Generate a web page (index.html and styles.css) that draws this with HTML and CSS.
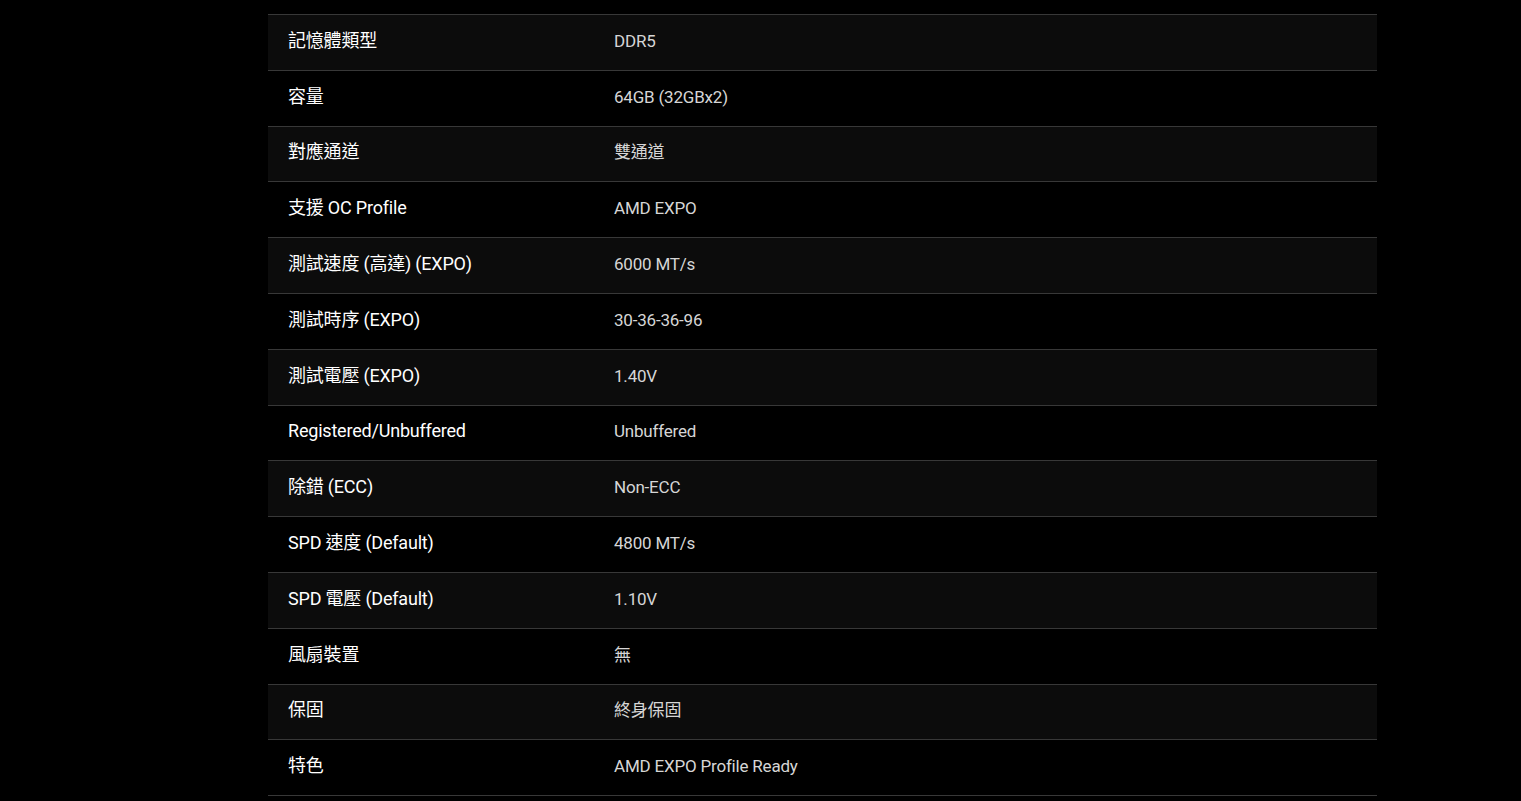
FILE: index.html
```html
<!DOCTYPE html>
<html lang="zh-Hant">
<head>
<meta charset="utf-8">
<title>規格</title>
<link rel="stylesheet" href="styles.css">
</head>
<body>
<div class="wrap">
<table class="spec">
<tbody>
<tr><td class="k">記憶體類型</td><td class="v">DDR5</td></tr>
<tr><td class="k">容量</td><td class="v">64GB (32GBx2)</td></tr>
<tr><td class="k">對應通道</td><td class="v">雙通道</td></tr>
<tr><td class="k">支援 OC Profile</td><td class="v">AMD EXPO</td></tr>
<tr><td class="k">測試速度 (高達) (EXPO)</td><td class="v">6000 MT/s</td></tr>
<tr><td class="k">測試時序 (EXPO)</td><td class="v">30-36-36-96</td></tr>
<tr><td class="k">測試電壓 (EXPO)</td><td class="v">1.40V</td></tr>
<tr><td class="k">Registered/Unbuffered</td><td class="v">Unbuffered</td></tr>
<tr><td class="k">除錯 (ECC)</td><td class="v">Non-ECC</td></tr>
<tr><td class="k">SPD 速度 (Default)</td><td class="v">4800 MT/s</td></tr>
<tr><td class="k">SPD 電壓 (Default)</td><td class="v">1.10V</td></tr>
<tr><td class="k">風扇裝置</td><td class="v">無</td></tr>
<tr><td class="k">保固</td><td class="v">終身保固</td></tr>
<tr><td class="k">特色</td><td class="v">AMD EXPO Profile Ready</td></tr>
</tbody>
</table>
</div>
</body>
</html>
```
FILE: styles.css
```css
html, body {
  margin: 0;
  padding: 0;
  background: #000;
}
body {
  font-family: Roboto, "Noto Sans CJK TC", sans-serif;
  overflow: hidden;
}
.wrap {
  padding-top: 14px;
  margin-left: 268px;
  width: 1109px;
}
.spec {
  width: 100%;
  border-collapse: collapse;
  table-layout: fixed;
}
.spec tr {
  border-top: 1px solid #383838;
  border-bottom: 1px solid #383838;
}
.spec tr:nth-child(odd) {
  background: #0c0c0c;
}
.spec tr:nth-child(even) {
  background: #000;
}
.spec td {
  height: 51.8px;
  padding: 0 20px 3px 20px;
  vertical-align: middle;
  font-size: 18px;
  line-height: 22px;
  letter-spacing: -0.2px;
}
.spec .k {
  width: 286px;
  color: #fff;
}
.spec .v {
  color: #d6d6d6;
  font-size: 17px;
}
```
